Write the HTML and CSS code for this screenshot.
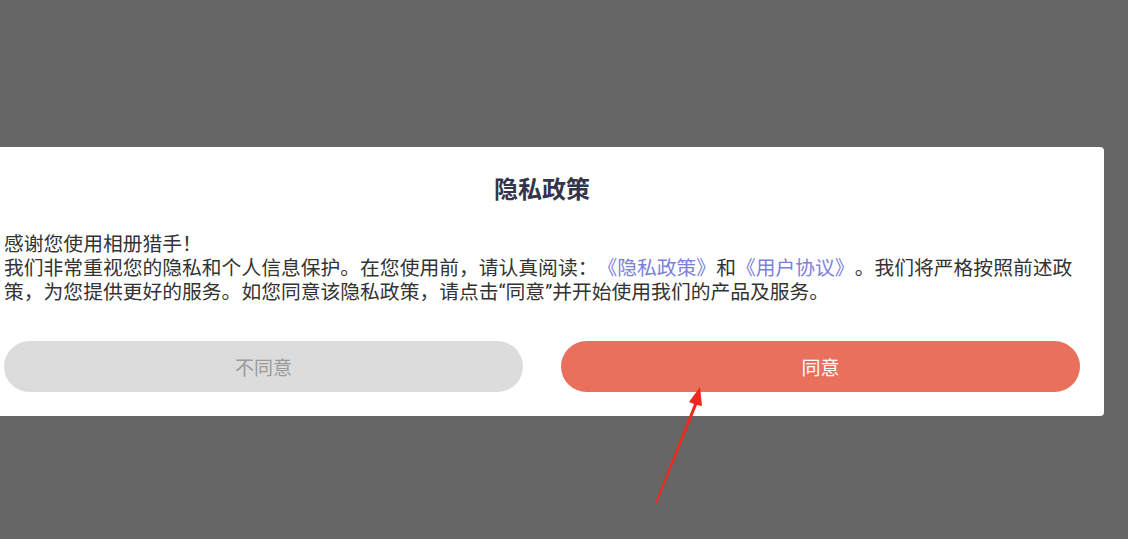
FILE: index.html
```html
<!DOCTYPE html>
<html lang="zh-CN">
<head>
<meta charset="utf-8">
<title>隐私政策</title>
<link rel="stylesheet" href="styles.css">
</head>
<body>
<div class="overlay">
  <div class="dialog">
    <h1 class="title">隐私政策</h1>
    <p class="content">感谢您使用相册猎手！<br>我们非常重视您的隐私和个人信息保护。在您使用前，请认真阅读：<span class="link">《隐私政策》</span>和<span class="link">《用户协议》</span>。我们将严格按照前述政策，为您提供更好的服务。如您同意该隐私政策，请点击<span class="quote">“</span>同意<span class="quote">”</span>并开始使用我们的产品及服务。</p>
    <div class="actions">
      <button class="btn btn-reject">不同意</button>
      <button class="btn btn-accept">同意</button>
    </div>
  </div>
  <svg class="arrow" width="1128" height="539" viewBox="0 0 1128 539">
    <polygon points="655,503 694,404 689,402 700,387 702,406 697,405 657,503" fill="#ee2a1e"/>
  </svg>
</div>
</body>
</html>
```

FILE: styles.css
```css
html, body {
  margin: 0;
  padding: 0;
  height: 100%;
  background: #666666;
  overflow: hidden;
}

.overlay {
  position: relative;
  height: 539px;
  padding-top: 147px;
  box-sizing: border-box;
  font-family: "Noto Sans CJK SC", "Noto Sans", sans-serif;
}

.dialog {
  margin-left: -20px;
  width: 1124px;
  box-sizing: border-box;
  background: #ffffff;
  border-radius: 4px;
  padding: 25px 24px 24px 24px;
}

.title {
  margin: 0;
  text-align: center;
  font-size: 24px;
  line-height: 32px;
  font-weight: 700;
  color: #34344a;
}

.content {
  margin: 27px 0 0 0;
  font-size: 19.8px;
  line-height: 24px;
  color: #333333;
  text-spacing-trim: space-all;
}

.quote {
  font-family: Roboto, "Noto Sans CJK SC", sans-serif;
}

.link {
  color: #7c7fdc;
}

.actions {
  margin-top: 36px;
  display: flex;
  gap: 38px;
}

.btn {
  flex: 1;
  height: 51px;
  border: none;
  border-radius: 26px;
  font-family: "Noto Sans CJK SC", sans-serif;
  font-size: 19px;
  padding: 0;
}

.btn-reject {
  background: #dcdcdc;
  color: #9a9a9a;
}

.btn-accept {
  background: #e8705c;
  color: #ffffff;
}

.arrow {
  position: absolute;
  left: 0;
  top: 0;
  pointer-events: none;
}
```
